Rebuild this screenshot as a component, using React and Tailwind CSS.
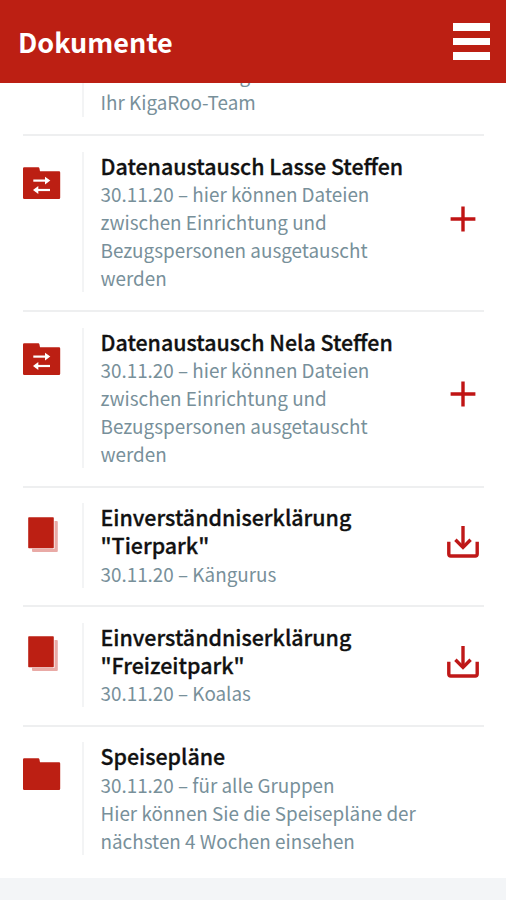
const FolderIcon = ({ exchange }) => (
  <svg width="38" height="33" viewBox="0 0 38 33" className="block" fill="none">
    <path d="M1.2 0.3H15.3Q16.2 0.3 16.4 1.3L17 4.3H36Q37.2 4.3 37.2 5.5V30.8Q37.2 32 36 32H1.2Q0 32 0 30.8V1.5Q0 0.3 1.2 0.3Z" fill="#bc1f13" />
    {exchange && (
      <g stroke="#fff" strokeWidth="2.2">
        <path d="M10.3 13.6H25" />
        <path d="M12 23H27" />
        <path d="M22 9.7L27.3 13.6L22 17.5Z" fill="#fff" stroke="none" />
        <path d="M15.3 19.1L10 23L15.3 26.9Z" fill="#fff" stroke="none" />
      </g>
    )}
  </svg>
);

const PagesIcon = () => (
  <svg width="38" height="36" viewBox="0 0 38 36" className="block">
    <rect x="9" y="4" width="25.8" height="31" rx="1" fill="#e9aaa6" />
    <rect x="4.5" y="0" width="27" height="31.8" fill="#fff" />
    <rect x="5.2" y="0.2" width="25.6" height="31" rx="0.8" fill="#bc1f13" />
  </svg>
);

const PlusIcon = () => (
  <svg width="32" height="32" viewBox="0 0 32 32" className="block" stroke="#c01414" strokeWidth="3.4">
    <path d="M16 3.6V28.4M3.6 16H28.4" />
  </svg>
);

const DownloadIcon = () => (
  <svg width="32" height="32" viewBox="0 0 32 32" className="block" fill="none" stroke="#bf1818" strokeWidth="3.4">
    <path d="M16 0V21.5" />
    <path d="M8.4 13.8L16 21.4L23.6 13.8" />
    <path d="M1.8 15.8V28Q1.8 30 3.8 30H28.2Q30.2 30 30.2 28V15.8" />
  </svg>
);

const rows = [
  {
    icon: "exchange",
    title: ["Datenaustausch Lasse Steffen"],
    text: ["30.11.20 – hier können Dateien", "zwischen Einrichtung und", "Bezugspersonen ausgetauscht", "werden"],
    action: "plus",
  },
  {
    icon: "exchange",
    title: ["Datenaustausch Nela Steffen"],
    text: ["30.11.20 – hier können Dateien", "zwischen Einrichtung und", "Bezugspersonen ausgetauscht", "werden"],
    action: "plus",
  },
  { icon: "pages", title: ["Einverständniserklärung", '"Tierpark"'], text: ["30.11.20 – Kängurus"], action: "download" },
  { icon: "pages", title: ["Einverständniserklärung", '"Freizeitpark"'], text: ["30.11.20 – Koalas"], action: "download" },
  {
    icon: "folder",
    title: ["Speisepläne"],
    text: ["30.11.20 – für alle Gruppen", "Hier können Sie die Speisepläne der", "nächsten 4 Wochen einsehen"],
  },
];

function Row({ icon, title, text, action }) {
  return (
    <li className="flex border-t-2 border-[#eeeff0] pt-[15.8px] pb-[17.5px]">
      <div className="w-[59px] shrink-0 pt-[15.5px]">
        {icon === "pages" ? <div className="-mt-[2px]"><PagesIcon /></div> : <FolderIcon exchange={icon === "exchange"} />}
      </div>
      <div className="flex-1 border-l-2 border-[#f3f4f5] pl-[16.5px] whitespace-nowrap">
        {title.map((line) => (
          <div key={line} className="h-[28.1px] text-[21.4px] font-medium text-[#111] [-webkit-text-stroke:0.3px_#111]">{line}</div>
        ))}
        {text.map((line) => (
          <div key={line} className="h-[28.1px] text-[#78909a]">{line}</div>
        ))}
      </div>
      {action && (
        <div className="flex w-[37px] shrink-0 items-center">
          {action === "plus" ? <div className="-mt-[7px]"><PlusIcon /></div> : <div className="-mt-[7px]"><DownloadIcon /></div>}
        </div>
      )}
    </li>
  );
}

export default function App() {
  return (
    <div className="flex h-[900px] w-[506px] flex-col overflow-hidden bg-[#f3f5f7] font-['Noto_Sans_CJK_SC','Noto_Sans',sans-serif] text-[18.87px] leading-[28.1px]">
      <header className="flex h-[83px] shrink-0 items-center justify-between bg-[#bc1f13] pr-4 pl-[18px] text-white">
        <h1 className="text-[27px] leading-[36px] font-bold">Dokumente</h1>
        <div className="flex w-[37px] flex-col gap-[7px]">
          <span className="h-[8px] bg-white" />
          <span className="h-[7px] bg-white" />
          <span className="h-[8px] bg-white" />
        </div>
      </header>
      <main className="h-[795px] shrink-0 overflow-hidden bg-white pr-[22px] pl-[23px]">
        <div className="flex h-[51px] items-start">
          <div className="ml-[59px] flex h-[34px] flex-col justify-end overflow-hidden border-l-2 border-[#f3f4f5] pl-[16.5px] text-[#78909a]">
            <div className="h-[28.1px] shrink-0 pl-[139px]">g</div>
            <div className="h-[28.6px] shrink-0">Ihr KigaRoo-Team</div>
          </div>
        </div>
        <ul>
          {rows.map((row) => (
            <Row key={row.title.join(" ")} {...row} />
          ))}
        </ul>
      </main>
    </div>
  );
}
